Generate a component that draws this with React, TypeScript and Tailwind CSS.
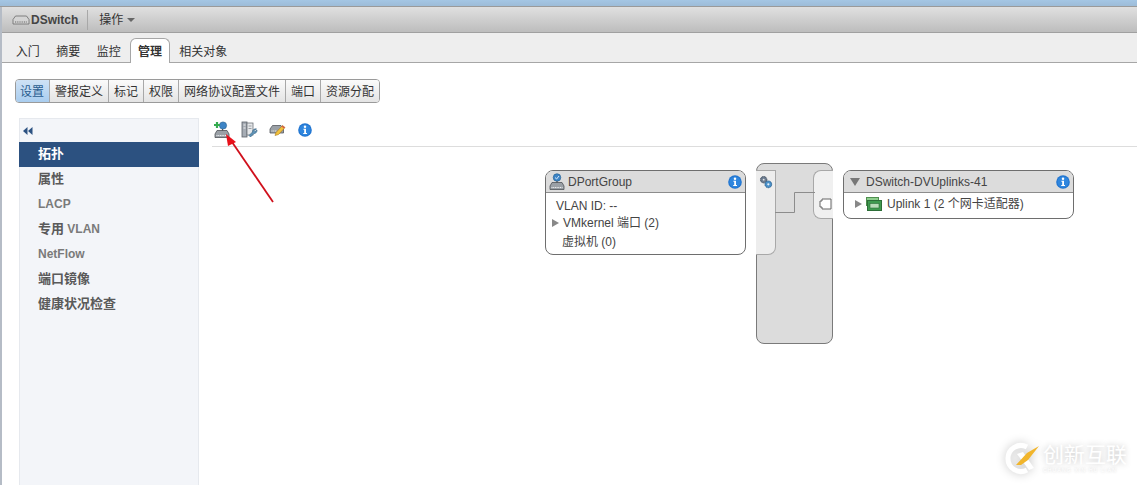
import { ReactNode } from 'react'

const mainTabs = ['入门', '摘要', '监控', '管理', '相关对象']
const subTabs = ['设置', '警报定义', '标记', '权限', '网络协议配置文件', '端口', '资源分配']
const navItems = [
  { label: '拓扑', active: true },
  { label: '属性' },
  { label: 'LACP', muted: true },
  { label: '专用', latin: ' VLAN' },
  { label: 'NetFlow', muted: true },
  { label: '端口镜像' },
  { label: '健康状况检查' },
]

function SwitchBase({ x = 0, y = 0 }: { x?: number; y?: number }) {
  return (
    <g transform={`translate(${x} ${y})`}>
      <path d="M1 4.5 L3 1 H13 L15 4.5 V8 H1 Z" fill="#9aa0a6" stroke="#4f5358" strokeWidth="0.8" />
      <path d="M2.5 6 H13.5" stroke="#f1f2f3" strokeWidth="1.2" strokeDasharray="1 0.7" />
    </g>
  )
}

function InfoIcon({ size = 14 }: { size?: number }) {
  return (
    <svg width={size} height={size} viewBox="0 0 14 14" className="shrink-0">
      <circle cx="7" cy="7" r="6.8" fill="#2175d0" />
      <circle cx="7" cy="7" r="5.6" fill="#2f86de" />
      <circle cx="7" cy="3.7" r="1.25" fill="#fff" />
      <path d="M5.4 5.8 H8 V10 H9 V11 H5.2 V10 H6.2 V6.8 H5.4 Z" fill="#fff" />
    </svg>
  )
}

function AddPortGroupIcon() {
  return (
    <svg width="17" height="17" viewBox="0 0 17 17">
      <circle cx="10" cy="4.5" r="3.6" fill="#3d84c6" stroke="#24608f" strokeWidth="0.6" />
      <path d="M4 1 V7 M1 4 H7" stroke="#35ab4f" strokeWidth="2.2" />
      <path d="M9.5 8 V10" stroke="#555" strokeWidth="1.2" />
      <SwitchBase x={1} y={8.5} />
    </svg>
  )
}

function ManageIcon() {
  return (
    <svg width="17" height="17" viewBox="0 0 17 17">
      <rect x="1" y="1" width="5" height="15" fill="#a6acb4" stroke="#5b6068" strokeWidth="0.8" />
      <rect x="6" y="2" width="6" height="12" fill="#e6e8ea" stroke="#6d7278" strokeWidth="0.8" />
      <path d="M2.5 4 H4.5 M2.5 7 H4.5" stroke="#eee" />
      <path d="M7.5 5 H10.5 M7.5 7.5 H10.5" stroke="#9a9ea4" />
      <path d="M15.5 8 A3 3 0 0 0 11.5 11 L8 14.5 L9.5 16 L13 12.5 A3 3 0 0 0 16 9 L14 10.5 L13 9.5 Z" fill="#5d93b8" stroke="#35617f" strokeWidth="0.6" />
    </svg>
  )
}

function EditIcon() {
  return (
    <svg width="17" height="15" viewBox="0 0 17 15">
      <path d="M1 7 L3.5 3.5 H12 L14.5 7 V11 H1 Z" fill="#9aa0a6" stroke="#55595e" strokeWidth="0.8" />
      <path d="M2.5 9 H8" stroke="#eee" strokeWidth="1.2" strokeDasharray="1 0.7" />
      <path d="M6 13.5 L7 10.5 L13.5 3.5 L16 5.5 L9.5 12.5 Z" fill="#f2c23c" stroke="#a8791a" strokeWidth="0.6" />
      <path d="M13.5 3.5 L16 5.5 L15 6.6 L12.5 4.6 Z" fill="#d9584a" />
    </svg>
  )
}

function SmallTri({ className }: { className: string }) {
  return <span className={`w-0 h-0 border-y-[4px] border-y-transparent border-l-[7px] ${className}`} />
}

function Card({ title, lead, className, children }: { title: string; lead: ReactNode; className: string; children: ReactNode }) {
  return (
    <div className={`absolute rounded-[8px] border border-[#6e6e6e] bg-white overflow-hidden ${className}`}>
      <div className="h-[22px] bg-[#dcdcdc] border-b border-[#8c8c8c] flex items-center pl-[3px] pr-[3px]">
        {lead}
        <span className="ml-[3px] text-[12px] text-[#444]">{title}</span>
        <span className="ml-auto flex">
          <InfoIcon />
        </span>
      </div>
      {children}
    </div>
  )
}

export default function App() {
  return (
    <div className="relative w-[1137px] h-[485px] overflow-hidden bg-white flex flex-col text-[#333] font-['Liberation_Sans','Noto_Sans_CJK_SC',sans-serif]">
      <div className="h-[7px] shrink-0 bg-gradient-to-b from-[#a4c6e4] to-[#9dbcd8] border-b border-[#9a9a9a]" />

      <div className="flex-1 flex flex-col min-h-0 border-l-2 border-[#b5bcc6]">
        {/* title bar */}
        <div className="h-[26px] shrink-0 flex items-center bg-gradient-to-b from-[#e0e0e0] to-[#bdbdbd] border-b border-[#a0a0a0] pl-[10px]">
          <svg width="18" height="10" viewBox="0 0 18 10">
            <path d="M1 4.5 L3.5 1 H14.5 L17 4.5 V9 H1 Z" fill="#d4d4d4" stroke="#6a6a6a" strokeWidth="0.8" />
            <path d="M3 7 H15" stroke="#666" strokeWidth="1.2" strokeDasharray="1 0.8" />
          </svg>
          <span className="ml-[1px] text-[12px] font-bold text-[#444]">DSwitch</span>
          <span className="ml-[9px] h-[20px] w-px bg-[#a8a8a8]" />
          <span className="ml-[11px] text-[12px] text-[#333]">操作</span>
          <span className="ml-[4px] w-0 h-0 border-x-[4px] border-x-transparent border-t-[4px] border-t-[#666]" />
        </div>

        {/* main tabs */}
        <div className="h-[30px] shrink-0 flex items-end bg-[#eeeeee] border-b border-[#a6a6a6] pl-[5.5px]">
          {mainTabs.map((t) =>
            t === '管理' ? (
              <div key={t} className="relative -mb-px h-[25px] mx-[1px] px-[7px] pt-[2px] flex items-center bg-white border border-b-0 border-[#a6a6a6] rounded-t-[6px] text-[12px] font-bold text-[#333]">
                {t}
              </div>
            ) : (
              <div key={t} className="h-[20px] px-[8.25px] flex items-center text-[12px] text-[#333]">
                {t}
              </div>
            ),
          )}
        </div>

        {/* sub tabs */}
        <div className="flex pl-[13px] pt-[16px] shrink-0">
          <div className="flex h-[24px] rounded-[4px] border border-[#9a9a9a] overflow-hidden">
            {subTabs.map((t, i) => (
              <div
                key={t}
                className={`pt-[2px] flex items-center text-[12px] ${i > 0 ? 'px-[5px] border-l border-[#a8a8a8]' : 'pl-[4px] pr-[5px]'} ${
                  i === 0
                    ? 'bg-gradient-to-b from-[#cfe2f5] to-[#a9cdef] text-[#2a5d8f]'
                    : 'bg-gradient-to-b from-[#fbfbfb] to-[#e4e4e4] text-[#333]'
                }`}
              >
                {t}
              </div>
            ))}
          </div>
        </div>

        <div className="flex-1 flex min-h-0 pt-[15px] pl-[17px]">
          {/* side nav */}
          <div className="w-[180px] shrink-0 bg-[#f3f5f9] border-x border-t border-[#e6e9ee]">
            <div className="h-[23px] flex items-center pl-[3px]">
              <svg width="10" height="8" viewBox="0 0 10 8">
                <path d="M4.5 0 V8 L0 4 Z M9.5 0 V8 L5 4 Z" fill="#2c5282" />
              </svg>
            </div>
            {navItems.map((n) => (
              <div
                key={n.label}
                className={`h-[25px] -mx-px pb-[2px] flex items-center pl-[19px] font-bold ${n.muted ? 'text-[12px]' : 'text-[13px]'} ${
                  n.active ? 'bg-[#2c5180] text-white' : n.muted ? 'text-[#7a7a7a]' : 'text-[#5a5a5a]'
                }`}
              >
                {n.label}
                {n.latin && <span className="text-[12px] text-[#7a7a7a] whitespace-pre">{n.latin}</span>}
              </div>
            ))}
          </div>

          {/* toolbar */}
          <div className="flex-1 min-w-0 pl-[13px]">
            <div className="h-[29px] flex items-center gap-[11px] border-b border-[#dddddd] pl-[1px] pb-[5px]">
              <AddPortGroupIcon />
              <ManageIcon />
              <EditIcon />
              <span className="ml-[1px] flex">
                <InfoIcon />
              </span>
            </div>
          </div>
        </div>
      </div>

      {/* topology diagram */}
      <Card
        title="DPortGroup"
        className="left-[545px] top-[170px] w-[201px] h-[85px]"
        lead={
          <svg width="16" height="17" viewBox="0 0 16 17">
            <circle cx="8" cy="4.5" r="3.8" fill="#3d84c6" stroke="#24608f" strokeWidth="0.6" />
            <path d="M6 4.5 L7.6 6 L10 3" stroke="#d8ecff" strokeWidth="1" fill="none" />
            <path d="M8 8 V10" stroke="#555" strokeWidth="1.2" />
            <SwitchBase y={8.5} />
          </svg>
        }
      >
        <div className="pl-[10px] pt-[4px] text-[12px] leading-[18px] text-[#444]">
          <div>VLAN ID: --</div>
          <div className="flex items-center -ml-[4px] -mt-px">
            <SmallTri className="border-l-[#888]" />
            <span className="ml-[4px]">VMkernel 端口 (2)</span>
          </div>
          <div className="ml-[6px] mt-px">虚拟机 (0)</div>
        </div>
      </Card>

      <div className="absolute left-[756px] top-[163px] w-[77px] h-[181px] rounded-[8px] border border-[#7a7a7a] bg-[#dcdcdc]">
        <div className="absolute -left-px top-[6px] w-[20px] h-[85px] bg-[#ededed] border border-l-0 border-[#a8a8a8] rounded-br-[8px] flex justify-center pt-[4px]">
          <svg width="14" height="14" viewBox="0 0 15 15">
            <circle cx="5" cy="5" r="3.4" fill="#6c7c90" stroke="#3e4a5a" strokeWidth="1" strokeDasharray="1.6 0.6" />
            <circle cx="10" cy="10" r="3.6" fill="#4a90c8" stroke="#2a5f8d" strokeWidth="1" strokeDasharray="1.6 0.6" />
            <circle cx="10" cy="10" r="1.2" fill="#e6f0f8" />
            <circle cx="5" cy="5" r="1" fill="#e6e6e6" />
          </svg>
        </div>
        <div className="absolute -right-px top-[6px] w-[20px] h-[49px] bg-[#f0f0f0] border border-r-0 border-[#a8a8a8] rounded-l-[8px] pl-[5px] pt-[27px]">
          <svg width="13" height="12" viewBox="0 0 13 12">
            <path d="M3 1 H12 V11 H3 V9 H1 V3 H3 Z" fill="#fff" stroke="#666" strokeWidth="1" />
          </svg>
        </div>
        <svg className="absolute left-[18px] top-[27px]" width="40" height="24" viewBox="0 0 40 24">
          <path d="M0 21.5 H19.5 V1.5 H40" fill="none" stroke="#8c8c8c" strokeWidth="1" />
        </svg>
      </div>

      <Card
        title="DSwitch-DVUplinks-41"
        className="left-[843px] top-[170px] w-[231px] h-[49px]"
        lead={
          <span className="ml-[3px] mr-[3px] w-0 h-0 border-x-[5px] border-x-transparent border-t-[8px] border-t-[#777]" />
        }
      >
        <div className="flex items-center pl-[11px] pt-[2px] text-[12px] leading-[18px] text-[#444]">
          <SmallTri className="border-l-[#888]" />
          <svg className="ml-[4px]" width="16" height="14" viewBox="0 0 16 14">
            <rect x="0.5" y="0.5" width="12" height="8" fill="#8fcf8f" stroke="#4f8f4f" />
            <rect x="1.5" y="3.5" width="14" height="10" fill="#3f9a4f" stroke="#2c6e38" />
            <rect x="4" y="6.5" width="9" height="4.5" fill="#b9dcb9" stroke="#2c6e38" strokeWidth="0.6" />
          </svg>
          <span className="ml-[5px]">Uplink 1 (2 个网卡适配器)</span>
        </div>
      </Card>

      {/* red annotation arrow */}
      <svg className="absolute left-[215px] top-[125px] pointer-events-none" width="70" height="85" viewBox="0 0 70 85">
        <path d="M58 77 L17 17" stroke="#d0101c" strokeWidth="1.8" fill="none" />
        <path d="M11 9 L21 17 L13 21 Z" fill="#e8101a" />
      </svg>

      {/* watermark */}
      <div className="absolute left-[1003px] top-[440px] flex items-center pointer-events-none">
        <svg width="38" height="36" viewBox="0 0 38 36" className="drop-shadow-[0_0_5px_#c4c4c4]">
          <path d="M24 7 A13 13 0 1 0 24 30" fill="none" stroke="#ffffff" strokeWidth="5" />
          <path d="M14 14 L26 30 L31 28 L20 12 Z" fill="#ffffff" />
          <path d="M13 25 L24 13 L36 6 L25 20 L18 25 Z" fill="#f1b52c" />
        </svg>
        <div className="ml-[2px] flex flex-col items-start">
          <span className="text-[21px] leading-[24px] text-white [text-shadow:0_0_6px_#c0c0c0]">创新互联</span>
          <span className="text-[5px] leading-[6px] text-white tracking-[1.2px] [text-shadow:0_0_3px_#bbbbbb]">CHUANG XIN HU LIAN</span>
        </div>
      </div>
    </div>
  )
}
